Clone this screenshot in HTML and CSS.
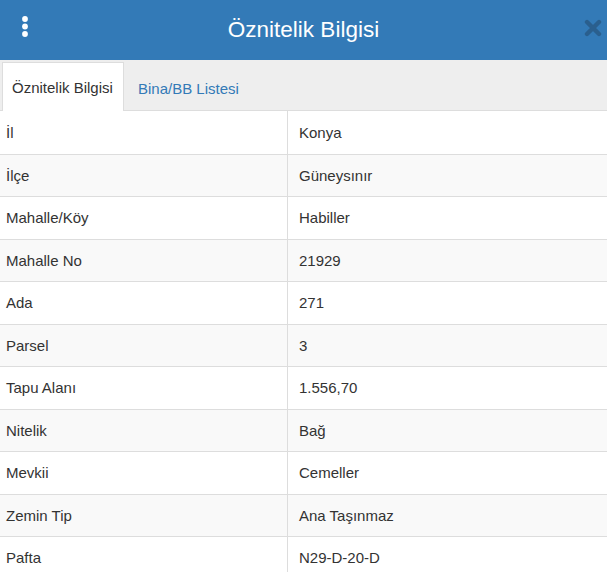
FILE: index.html
```html
<!DOCTYPE html>
<html lang="tr">
<head>
<meta charset="utf-8">
<title>Öznitelik Bilgisi</title>
<link rel="stylesheet" href="styles.css">
</head>
<body>
<div class="panel">
  <header class="header">
    <span class="kebab"><svg width="10" height="24" viewBox="0 0 10 24"><circle cx="5" cy="4" r="2.9" fill="#fff"/><circle cx="5" cy="11.5" r="2.9" fill="#fff"/><circle cx="5" cy="19" r="2.9" fill="#fff"/></svg></span>
    <h1 class="title">Öznitelik Bilgisi</h1>
    <span class="close"><svg width="18" height="18" viewBox="0 0 18 18"><path d="M3 3 L15 15 M15 3 L3 15" stroke="#2a5f8e" stroke-width="4.4" stroke-linecap="round"/></svg></span>
  </header>
  <nav class="tabs">
    <span class="tab active">Öznitelik Bilgisi</span>
    <span class="tab">Bina/BB Listesi</span>
  </nav>
  <div class="table">
    <div class="row"><div class="key">İl</div><div class="val">Konya</div></div>
    <div class="row"><div class="key">İlçe</div><div class="val">Güneysınır</div></div>
    <div class="row"><div class="key">Mahalle/Köy</div><div class="val">Habiller</div></div>
    <div class="row"><div class="key">Mahalle No</div><div class="val">21929</div></div>
    <div class="row"><div class="key">Ada</div><div class="val">271</div></div>
    <div class="row"><div class="key">Parsel</div><div class="val">3</div></div>
    <div class="row"><div class="key">Tapu Alanı</div><div class="val">1.556,70</div></div>
    <div class="row"><div class="key">Nitelik</div><div class="val">Bağ</div></div>
    <div class="row"><div class="key">Mevkii</div><div class="val">Cemeller</div></div>
    <div class="row"><div class="key">Zemin Tip</div><div class="val">Ana Taşınmaz</div></div>
    <div class="row"><div class="key">Pafta</div><div class="val">N29-D-20-D</div></div>
  </div>
</div>
</body>
</html>
```
FILE: styles.css
```css
html, body {
  margin: 0;
  padding: 0;
  background: #fff;
}
body {
  font-family: "Liberation Sans", Arial, sans-serif;
  color: #333;
  overflow: hidden;
}
.header {
  height: 60px;
  background: #337ab7;
  display: flex;
  align-items: center;
  justify-content: center;
  position: relative;
}
.title {
  margin: 0;
  font-size: 22.5px;
  font-weight: normal;
  color: #fff;
  line-height: 1;
}
.kebab {
  position: absolute;
  left: 20px;
  top: 15px;
  width: 10px;
  height: 24px;
}
.kebab svg, .close svg { display: block; }
.close {
  position: absolute;
  left: 584px;
  top: 19px;
}
.tabs {
  height: 51px;
  box-sizing: border-box;
  background: #eee;
  border-bottom: 1px solid #ddd;
  display: flex;
  align-items: flex-end;
  padding-left: 2px;
}
.tab {
  font-size: 15px;
  white-space: nowrap;
  height: 47px;
  box-sizing: border-box;
  padding: 0 10px 0 13px;
  display: flex;
  align-items: center;
  color: #337ab7;
  border: 1px solid transparent;
  border-bottom: none;
  margin-bottom: -1px;
}
.tab.active {
  color: #333;
  background: #fff;
  border-color: #ddd;
  height: 49px;
  width: 122px;
  padding: 0 0 0 9px;
}
.table {
  display: flex;
  flex-direction: column;
}
.row {
  display: grid;
  grid-template-columns: 288px 1fr;
  height: 42.5px;
  box-sizing: border-box;
  border-top: 1px solid #ddd;
  font-size: 15px;
}
.row:first-child { border-top: none; }
.row:nth-child(even) { background: #f9f9f9; }
.key {
  display: flex;
  align-items: center;
  padding-left: 6px;
  border-right: 1px solid #ddd;
}
.val {
  display: flex;
  align-items: center;
  padding-left: 11px;
}
```
